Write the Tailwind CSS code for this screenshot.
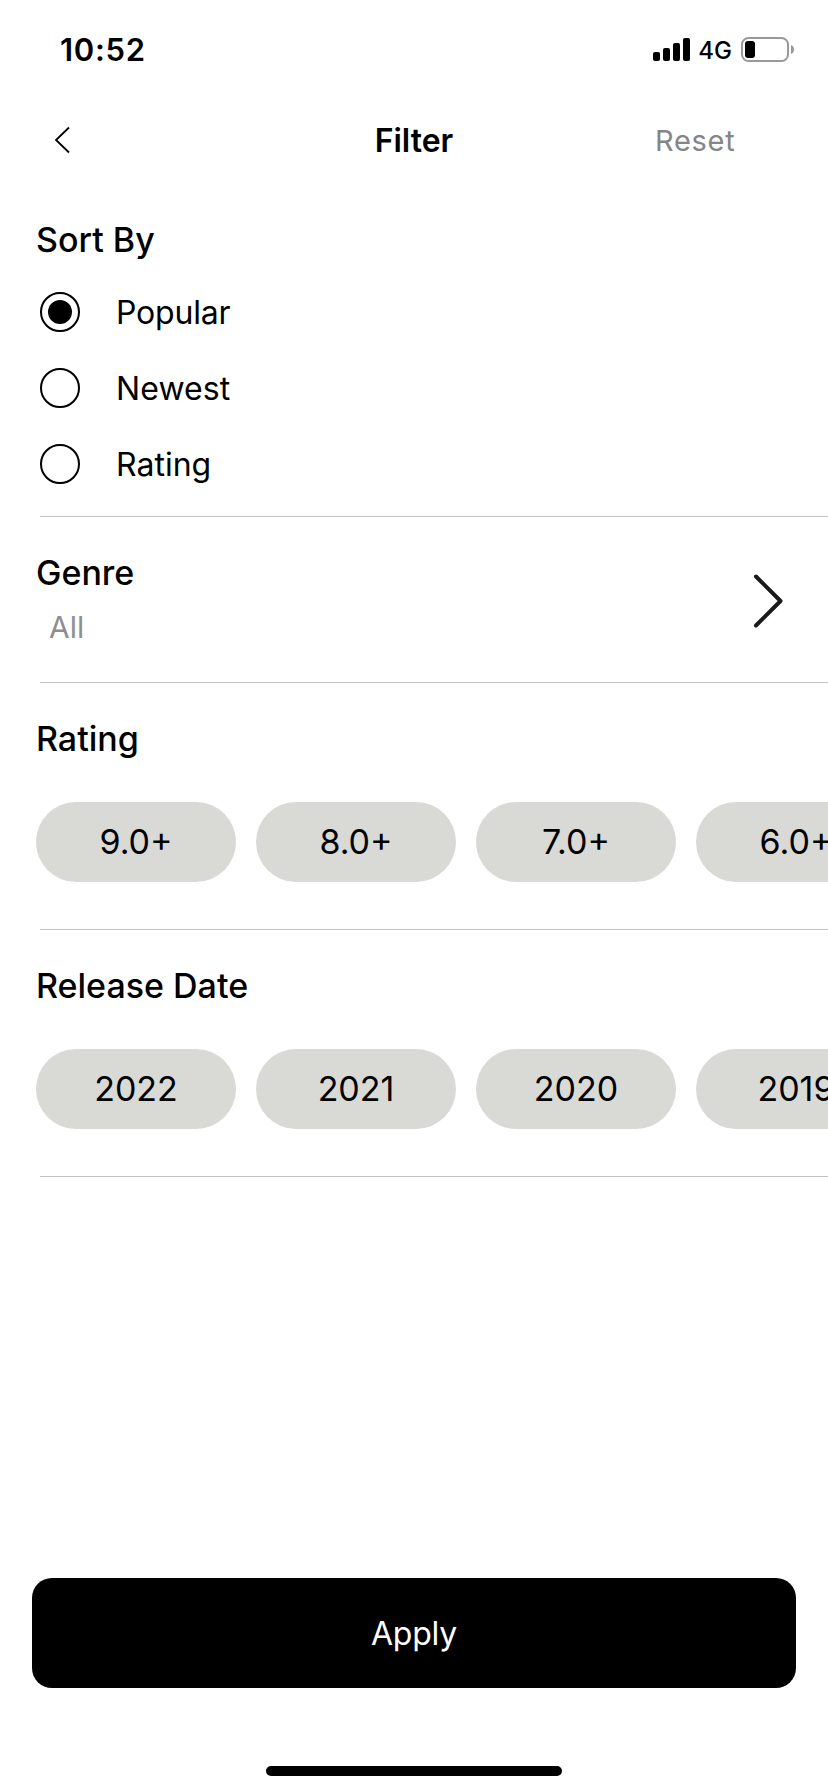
<!DOCTYPE html>
<html lang="en"><head><meta charset="utf-8"><title>Filter</title>
<script src="https://cdn.jsdelivr.net/npm/@tailwindcss/browser@4"></script></head>
<body class="bg-white">
<div class="w-[828px] h-[1792px] overflow-hidden flex flex-col bg-white text-black font-['Inter',sans-serif]">
  <div class="h-[100px] shrink-0 flex items-center justify-between pl-[60px] pr-[33px] pb-px">
    <span class="text-[31px] font-semibold leading-none tracking-[0.7px]">10:52</span>
    <div class="flex items-center">
      <svg class="w-[37px] h-[23px]" viewBox="0 0 37 23"><rect x="0" y="14" width="7" height="9" rx="2"/><rect x="10" y="10" width="7" height="13" rx="2"/><rect x="20" y="5" width="7" height="18" rx="2"/><rect x="30" y="0" width="7" height="23" rx="2"/></svg>
      <span class="ml-2 mr-[9px] pt-[2px] text-[24px] font-medium leading-none">4G</span>
      <svg class="w-[54px] h-[25px]" viewBox="0 0 54 25"><rect x="1" y="1" width="46" height="23" rx="6.5" fill="none" stroke="#999" stroke-width="2"/><rect x="4" y="4" width="10" height="17" rx="3"/><path d="M50 8c4 1.500 4 7.500 0 9z" fill="#999"/></svg>
    </div>
  </div>
  <header class="h-20 shrink-0 grid grid-cols-3 items-center">
    <svg class="ml-[54px] w-4 h-7" viewBox="0 0 16 28" fill="none" stroke="#000" stroke-width="1.800"><path d="M15 1.500 2 14 15 26.500"/></svg>
    <h1 class="pt-px text-center text-[32px] font-semibold leading-10">Filter</h1>
    <span class="pt-[2px] pl-[103px] text-[29px] leading-10 text-[#858585] tracking-[0.7px]">Reset</span>
  </header>
  <section class="pt-9 pb-8 pl-9">
    <h2 class="text-[34px] font-medium leading-[48px]">Sort By</h2>
    <div class="mt-7 pl-1 flex flex-col gap-9 text-[32px] leading-[38px]">
      <div class="h-10 flex items-center gap-9"><span class="size-10 rounded-full border-2 border-black flex items-center justify-center"><span class="size-6 rounded-full bg-black"></span></span><span class="pt-[2px] tracking-[-0.2px]">Popular</span></div>
      <div class="h-10 flex items-center gap-9"><span class="size-10 rounded-full border-2 border-black"></span><span class="pt-[2px] tracking-[0.1px]">Newest</span></div>
      <div class="h-10 flex items-center gap-9"><span class="size-10 rounded-full border-2 border-black"></span><span class="pt-[2px]">Rating</span></div>
    </div>
  </section>
  <hr class="ml-10 border-t border-[#c3c3c3]">
  <section class="h-[165px] pt-8 pl-9 pr-[45px] flex justify-between">
    <div>
      <h2 class="text-[34px] font-medium leading-[48px]">Genre</h2>
      <p class="mt-[10px] pl-[13px] text-[30px] leading-10 text-[#8e8e8e]">All</p>
    </div>
    <svg class="mt-6 w-[30px] h-14" viewBox="0 0 30 56" fill="none" stroke="#1a1a1a" stroke-width="4" stroke-linecap="round" stroke-linejoin="round"><path d="M3 3.500 27.500 28 3 52.500"/></svg>
  </section>
  <hr class="ml-10 border-t border-[#c3c3c3]">
  <section class="pt-8 pb-[47px] pl-9">
    <h2 class="text-[34px] font-medium leading-[48px]">Rating</h2>
    <div class="mt-[39px] flex gap-5 text-[34px]">
      <div class="w-[200px] h-20 pb-px shrink-0 rounded-full bg-[#d9dad5] flex items-center justify-center">9.0+</div>
      <div class="w-[200px] h-20 pb-px shrink-0 rounded-full bg-[#d9dad5] flex items-center justify-center">8.0+</div>
      <div class="w-[200px] h-20 pb-px shrink-0 rounded-full bg-[#d9dad5] flex items-center justify-center">7.0+</div>
      <div class="w-[200px] h-20 pb-px shrink-0 rounded-full bg-[#d9dad5] flex items-center justify-center">6.0+</div>
    </div>
  </section>
  <hr class="ml-10 border-t border-[#c3c3c3]">
  <section class="pt-8 pb-[47px] pl-9">
    <h2 class="text-[34px] font-medium leading-[48px]">Release Date</h2>
    <div class="mt-[39px] flex gap-5 text-[34px]">
      <div class="w-[200px] h-20 pb-px shrink-0 rounded-full bg-[#d9dad5] flex items-center justify-center">2022</div>
      <div class="w-[200px] h-20 pb-px shrink-0 rounded-full bg-[#d9dad5] flex items-center justify-center">2021</div>
      <div class="w-[200px] h-20 pb-px shrink-0 rounded-full bg-[#d9dad5] flex items-center justify-center">2020</div>
      <div class="w-[200px] h-20 pb-px shrink-0 rounded-full bg-[#d9dad5] flex items-center justify-center">2019</div>
    </div>
  </section>
  <hr class="ml-10 border-t border-[#c3c3c3]">
  <div class="mt-auto px-8 pb-4">
    <button class="w-full h-[110px] pt-px rounded-[20px] bg-black text-white text-[32px] tracking-[-0.2px] block">Apply</button>
    <div class="mt-[78px] mx-auto w-[296px] h-[10px] rounded-full bg-black"></div>
  </div>
</div>
</body></html>
